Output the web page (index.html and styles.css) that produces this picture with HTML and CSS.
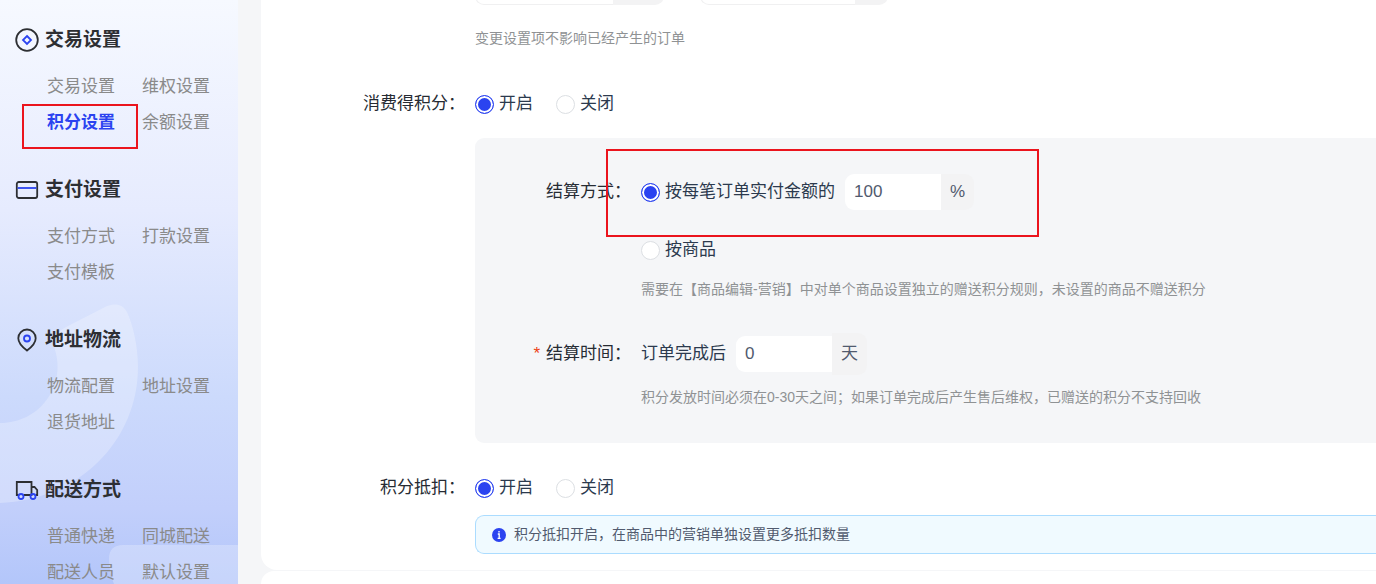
FILE: index.html
```html
<!doctype html>
<html lang="zh-CN">
    <head>
        <meta charset="utf-8">
        <title>积分设置</title>
        <link rel="stylesheet" href="styles.css">
    </head>
    <body>
        <nav class="sidebar">
            <svg class="sidebar-art" width="238" height="584" viewBox="0 0 238 584">
                <path d="M0 503C80 500 138 440 138 367C138 346 133 325 127 312C123 304 115 303 107 306L68 326C56 332 52 338 55 350C66 386 40 423 0 423Z"/>
                <path d="M238 545H123Q109 545 109 559Q109 573 114 584H238Z"/>
            </svg>

            <div class="menu-group">
                <h2>
                    <svg width="24" height="24" viewBox="0 0 24 24">
                        <circle cx="12" cy="12" r="10.8"/>
                        <path class="accent" d="M12 8l4 4-4 4-4-4z"/>
                    </svg>
                    交易设置
                </h2>
                <div class="menu-links">
                    <a href="#">交易设置</a>
                    <a href="#">维权设置</a>
                    <a href="#" class="active">积分设置</a>
                    <a href="#">余额设置</a>
                </div>
                <div class="mark mark-menu"></div>
            </div>

            <div class="menu-group">
                <h2>
                    <svg width="24" height="24" viewBox="0 0 24 24">
                        <rect x="1.8" y="4" width="20.4" height="16" rx="2"/>
                        <path class="accent" d="M2.6 10h18.8"/>
                    </svg>
                    支付设置
                </h2>
                <div class="menu-links">
                    <a href="#">支付方式</a>
                    <a href="#">打款设置</a>
                    <a href="#">支付模板</a>
                </div>
            </div>

            <div class="menu-group">
                <h2>
                    <svg width="24" height="24" viewBox="0 0 24 24">
                        <path d="M12 22.500C6 18 3.300 14 3.300 10.200a8.700 8.700 0 0 1 17.400 0C20.700 14 18 18 12 22.500z"/>
                        <circle class="accent" cx="12" cy="10.500" r="3"/>
                    </svg>
                    地址物流
                </h2>
                <div class="menu-links">
                    <a href="#">物流配置</a>
                    <a href="#">地址设置</a>
                    <a href="#">退货地址</a>
                </div>
            </div>

            <div class="menu-group">
                <h2>
                    <svg width="24" height="24" viewBox="0 0 24 24">
                        <path d="M3.500 17H1.800V4H16.500V17H9M16.500 9H19.500L22.200 12V17H21"/>
                        <circle class="accent" cx="6" cy="18.500" r="2.500"/>
                        <circle class="accent" cx="18" cy="18.500" r="2.500"/>
                    </svg>
                    配送方式
                </h2>
                <div class="menu-links">
                    <a href="#">普通快递</a>
                    <a href="#">同城配送</a>
                    <a href="#">配送人员</a>
                    <a href="#">默认设置</a>
                </div>
            </div>
        </nav>

        <main>
            <form class="card">
                <div class="form-row limits">
                    <span class="label"></span>
                    <div class="input-group bordered">
                        <input type="text" class="limit-first" aria-label="抵扣上限">
                        <span class="addon"></span>
                    </div>
                    <div class="input-group bordered">
                        <input type="text" class="limit-second" aria-label="抵扣比例">
                        <span class="addon"></span>
                    </div>
                </div>
                <p class="hint outer-hint">变更设置项不影响已经产生的订单</p>

                <div class="form-row earn-row">
                    <span class="label">消费得积分：</span>
                    <label class="radio"><input type="radio" name="earn" checked>开启</label>
                    <label class="radio"><input type="radio" name="earn">关闭</label>
                </div>

                <div class="panel">
                    <div class="form-row rate-row">
                        <span class="label">结算方式：</span>
                        <label class="radio"><input type="radio" name="method" checked>按每笔订单实付金额的</label>
                        <div class="input-group">
                            <input type="text" value="100" aria-label="实付金额百分比">
                            <span class="addon">%</span>
                        </div>
                        <div class="mark mark-rate"></div>
                    </div>
                    <div class="form-row goods-row">
                        <span class="label"></span>
                        <label class="radio"><input type="radio" name="method">按商品</label>
                    </div>
                    <p class="hint goods-hint">需要在【商品编辑-营销】中对单个商品设置独立的赠送积分规则，未设置的商品不赠送积分</p>

                    <div class="form-row time-row">
                        <span class="label"><i class="required">*</i>结算时间：</span>
                        <label for="days">订单完成后</label>
                        <div class="input-group">
                            <input type="text" id="days" value="0">
                            <span class="addon tall">天</span>
                        </div>
                    </div>
                    <p class="hint time-hint">积分发放时间必须在0-30天之间；如果订单完成后产生售后维权，已赠送的积分不支持回收</p>
                </div>

                <div class="form-row deduct-row">
                    <span class="label">积分抵扣：</span>
                    <label class="radio"><input type="radio" name="deduct" checked>开启</label>
                    <label class="radio"><input type="radio" name="deduct">关闭</label>
                </div>

                <div class="alert">
                    <svg width="14" height="14" viewBox="0 0 14 14">
                        <circle cx="7" cy="7" r="7" fill="#2b43f0"/>
                        <path d="M7 3v1.600M5.800 6H7.200V10.300M5.600 10.300H8.600" stroke="#fff" stroke-width="1.300" fill="none"/>
                    </svg>
                    积分抵扣开启，在商品中的营销单独设置更多抵扣数量
                </div>
            </form>
            <section class="card next-card"></section>
        </main>
    </body>
</html>
```

FILE: styles.css
```css
* {
    box-sizing: border-box;
}

body {
    margin: 0;
    height: 100vh;
    overflow: hidden;
    display: flex;
    background: #f5f6f8;
    color: #262b33;
    font-family: "Liberation Sans", "Noto Sans CJK SC", sans-serif;
    font-size: 17px;
    line-height: 24px;
}

p, h2 {
    margin: 0;
}

/* sidebar */
.sidebar {
    position: relative;
    flex: 0 0 238px;
    padding-top: 26px;
    overflow: hidden;
    background: linear-gradient(#f6f9ff, #e6ebfe 36%, #ccdafc 68%, #c2cffb 87%, #b3c6fa);
}

.sidebar-art {
    position: absolute;
    top: 0;
    left: 0;
    fill: #fff;
    fill-opacity: 0.25;
}

.menu-group {
    position: relative;
    height: 150px;
    padding-left: 15px;
}

.menu-group:last-child {
    height: auto;
}

.menu-group h2 {
    display: flex;
    align-items: center;
    gap: 6px;
    height: 28px;
    font-size: 19px;
    color: #2d2f33;
}

.menu-group h2 svg {
    fill: none;
    stroke: #2d2f33;
    stroke-width: 1.8;
}

.menu-group .accent {
    stroke: #2b43f0;
}

.menu-links {
    display: grid;
    grid-template-columns: 95px 95px;
    padding: 15px 0 0 32px;
    line-height: 36px;
}

.menu-links a {
    color: #8a8a8a;
    text-decoration: none;
}

.menu-links .active {
    color: #2b43f0;
    font-weight: bold;
}

/* red frames */
.mark {
    position: absolute;
    border: 2px solid #eb141d;
    pointer-events: none;
}

.mark-menu {
    left: 22px;
    top: 78px;
    width: 116px;
    height: 45px;
}

.mark-rate {
    left: 131px;
    top: -25px;
    width: 433px;
    height: 88px;
}

/* content, scrolled part way down */
main {
    flex: 1;
    display: flex;
    flex-direction: column;
    min-width: 0;
    margin: -31px 0 0 23px;
}

.card {
    padding-bottom: 16px;
    background: #fff;
    border-radius: 0 0 0 16px;
}

.next-card {
    flex: 1;
    margin-top: 1px;
    padding: 0;
    border-radius: 16px 0 0 0;
}

.form-row {
    position: relative;
    display: flex;
    align-items: center;
}

.label {
    flex: 0 0 214px;
    padding-right: 10px;
    text-align: right;
}

.limits {
    gap: 0 36px;
}

.limits .label {
    margin-right: -36px;
}

.radio {
    display: flex;
    align-items: center;
    gap: 5px;
    margin-right: 23px;
    color: #2c3a4e;
}

.radio input {
    appearance: none;
    width: 19px;
    height: 19px;
    margin: 0;
    border: 1px solid #dcdfe3;
    border-radius: 50%;
    background: #fff;
}

.radio input:checked {
    border-color: #2b43f0;
    background: #2b43f0;
    box-shadow: inset 0 0 0 2px #fff;
}

.input-group {
    display: flex;
    align-items: center;
    color: #515a6e;
}

.input-group input {
    width: 96px;
    height: 36px;
    padding: 0 9px;
    border: 0;
    border-radius: 9px 0 0 9px;
    background: #fff;
    color: #515a6e;
    font: inherit;
}

.addon {
    min-width: 33px;
    height: 36px;
    padding: 0 9px;
    border-radius: 0 9px 9px 0;
    background: #f3f3f4;
    line-height: 36px;
}

.addon.tall {
    height: 42px;
    line-height: 42px;
}

.bordered input {
    border: 1px solid #f0f0f1;
    border-right: 0;
}

.bordered .limit-first {
    width: 138px;
}

.limit-first + .addon {
    width: 51px;
}

.bordered .limit-second {
    width: 155px;
}

.hint {
    font-size: 14px;
    line-height: 22px;
    color: #8f9294;
}

.outer-hint {
    margin: 22px 0 0 214px;
}

.earn-row {
    margin-top: 43px;
}

.panel {
    margin: 22px 0 0 214px;
    padding: 36px 0 35px;
    border-radius: 9px 0 0 9px;
    background: #f5f6f8;
}

.panel .label {
    flex-basis: 166px;
}

.panel .hint {
    padding-left: 166px;
}

.rate-row .radio,
.time-row label {
    margin-right: 10px;
    color: #2c3a4e;
}

.goods-row {
    margin-top: 28px;
}

.goods-hint {
    margin-top: 16px;
}

.time-row {
    margin-top: 33px;
}

.time-hint {
    margin-top: 11px;
}

.required {
    margin-right: 4px;
    color: #ed4014;
    font-family: "Liberation Mono", monospace;
    font-style: normal;
}

.deduct-row {
    margin-top: 33px;
}

.alert {
    display: flex;
    align-items: center;
    gap: 8px;
    margin: 15px 0 0 214px;
    padding: 8px 16px;
    border: 1px solid #abdcff;
    border-right: 0;
    border-radius: 9px 0 0 9px;
    background: #f0faff;
    color: #515a6e;
    font-size: 14px;
    line-height: 21px;
}
```
